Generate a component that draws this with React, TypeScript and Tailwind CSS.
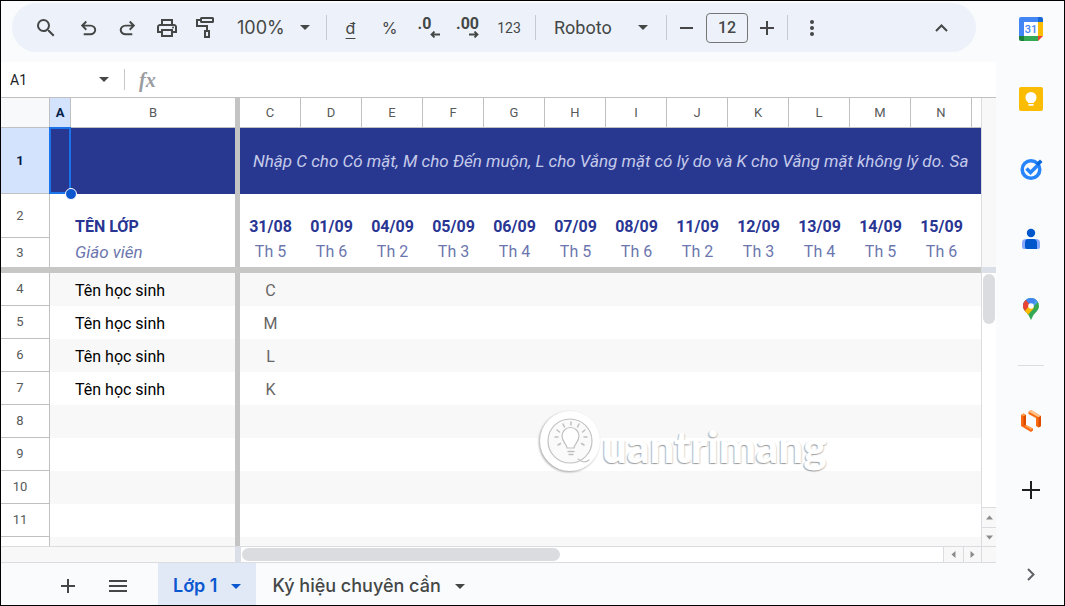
import type { ReactNode } from "react";
import { MdOutlinePrint, MdSearch } from "react-icons/md";

const days = [
  ["C", "31/08", "Th 5"],
  ["D", "01/09", "Th 6"],
  ["E", "04/09", "Th 2"],
  ["F", "05/09", "Th 3"],
  ["G", "06/09", "Th 4"],
  ["H", "07/09", "Th 5"],
  ["I", "08/09", "Th 6"],
  ["J", "11/09", "Th 2"],
  ["K", "12/09", "Th 3"],
  ["L", "13/09", "Th 4"],
  ["M", "14/09", "Th 5"],
  ["N", "15/09", "Th 6"],
];

const students = [
  { row: 4, name: "Tên học sinh", mark: "C" },
  { row: 5, name: "Tên học sinh", mark: "M" },
  { row: 6, name: "Tên học sinh", mark: "L" },
  { row: 7, name: "Tên học sinh", mark: "K" },
  { row: 8, name: "", mark: "" },
  { row: 9, name: "", mark: "" },
  { row: 10, name: "", mark: "" },
  { row: 11, name: "", mark: "" },
];

function Caret() {
  return (
    <svg width="10" height="5" viewBox="0 0 10 5" fill="currentColor" aria-hidden="true">
      <path d="M0 0h10L5 5z" />
    </svg>
  );
}

function Separator() {
  return <span className="mx-1 h-[25px] w-px shrink-0 bg-[#c7cbd1]" />;
}

function Tool({ label, children, wide }: { label: string; children: ReactNode; wide?: boolean }) {
  return (
    <button
      aria-label={label}
      className={
        wide
          ? "flex h-10 w-11 shrink-0 items-center justify-center"
          : "flex h-10 w-[39px] shrink-0 items-center justify-center"
      }
    >
      {children}
    </button>
  );
}

function Toolbar() {
  return (
    <div className="flex h-[61px] shrink-0 px-[11px] pt-[2px]">
      <div className="mr-[9px] flex h-[49px] flex-1 items-center rounded-full bg-[#edf2fa] pl-[14px] pr-[15px] text-[#444746]">
        <Tool label="Tìm kiếm">
          <MdSearch size={24} />
        </Tool>
        <span className="w-1 shrink-0" />
        <Tool label="Hoàn tác">
          <svg width="23" height="23" viewBox="0 -960 960 960" fill="currentColor">
            <path d="M280-200v-80h284q63 0 109.5-40T720-420q0-60-46.5-100T564-560H312l104 104-56 56-200-200 200-200 56 56-104 104h252q97 0 169.5 63T800-420q0 94-72.5 157T564-200H280Z" transform="translate(0 40)" />
          </svg>
        </Tool>
        <Tool label="Làm lại">
          <svg width="23" height="23" viewBox="0 -960 960 960" fill="currentColor">
            <path d="M396-200q-97 0-169.5-63T154-420q0-94 72.5-157T396-640h252L544-744l56-56 200 200-200 200-56-56 104-104H396q-63 0-109.5 40T240-420q0 60 46.5 100T396-280h284v80H396Z" transform="translate(0 40)" />
          </svg>
        </Tool>
        <Tool label="In">
          <MdOutlinePrint size={24} />
        </Tool>
        <Tool label="Sao chép định dạng">
          <svg width="20" height="23" viewBox="0 0 20 23" fill="none" stroke="currentColor" strokeWidth="2">
            <rect x="5" y="2" width="12" height="4" rx="0.5" />
            <path d="M5 4H1v6h10v5" />
            <rect x="9" y="15" width="4" height="6" />
          </svg>
        </Tool>
        <button className="flex h-10 w-[97px] shrink-0 items-center justify-between px-3 font-[Inter,sans-serif] text-lg">
          100%
          <Caret />
        </button>
        <Separator />
        <Tool label="Định dạng tiền tệ">
          <span className="font-[Inter,sans-serif] text-base underline underline-offset-4">đ</span>
        </Tool>
        <Tool label="Định dạng phần trăm">
          <span className="font-[Inter,sans-serif] text-base">%</span>
        </Tool>
        <Tool label="Giảm số chữ số thập phân">
          <span className="flex flex-col items-start font-[Roboto,sans-serif] text-base leading-[14px] font-bold">
            .0
            <svg className="ml-3" width="10" height="7" viewBox="0 0 10 7" fill="none" stroke="currentColor" strokeWidth="1.8">
              <path d="M10 3.5H1.5M4.5 .5l-3 3 3 3" />
            </svg>
          </span>
        </Tool>
        <Tool label="Tăng số chữ số thập phân">
          <span className="flex flex-col items-end font-[Roboto,sans-serif] text-base leading-[14px] font-bold">
            .00
            <svg width="10" height="7" viewBox="0 0 10 7" fill="none" stroke="currentColor" strokeWidth="1.8">
              <path d="M0 3.5h8.500M5.500 .5l3 3-3 3" />
            </svg>
          </span>
        </Tool>
        <Tool label="Định dạng khác" wide>
          <span className="font-[Roboto,sans-serif] text-sm">123</span>
        </Tool>
        <Separator />
        <button className="flex h-10 w-[122px] shrink-0 items-center justify-between px-[14px] font-[Roboto,sans-serif] text-lg">
          Roboto
          <Caret />
        </button>
        <Separator />
        <div className="flex shrink-0 items-center px-px">
          <button aria-label="Giảm cỡ chữ" className="flex h-[30px] w-[30px] items-center justify-center">
            <svg width="14" height="14" viewBox="0 0 14 14" fill="currentColor">
              <path d="M0 6h13v2H0z" />
            </svg>
          </button>
          <input
            aria-label="Cỡ chữ"
            defaultValue="12"
            className="mx-1 h-[30px] w-[42px] rounded-[4px] border border-[#747775] text-center font-[Roboto,sans-serif] text-base font-medium outline-none"
          />
          <button aria-label="Tăng cỡ chữ" className="flex h-[30px] w-[30px] items-center justify-center">
            <svg width="14" height="14" viewBox="0 0 14 14" fill="currentColor">
              <path d="M0 6h6V0h2v6h6v2H8v6H6V8H0z" />
            </svg>
          </button>
        </div>
        <Separator />
        <Tool label="Khác">
          <svg width="4" height="16" viewBox="0 0 4 16" fill="currentColor">
            <circle cx="2" cy="2" r="2" />
            <circle cx="2" cy="8" r="2" />
            <circle cx="2" cy="14" r="2" />
          </svg>
        </Tool>
        <button aria-label="Ẩn trình đơn" className="ml-auto flex h-10 w-10 items-center justify-center">
          <svg width="13" height="8" viewBox="0 0 13 8" fill="none" stroke="currentColor" strokeWidth="2">
            <path d="M1 7l5.500-5.500L12 7" />
          </svg>
        </button>
      </div>
    </div>
  );
}

function FormulaBar() {
  return (
    <div className="flex h-9 shrink-0 items-center border-b border-[#c0c0c0] bg-white">
      <input
        aria-label="Hộp tên"
        defaultValue="A1"
        className="w-[98px] pl-[9px] font-[Roboto,sans-serif] text-sm text-[#202124] outline-none"
      />
      <button aria-label="Mở hộp tên" className="text-[#444746]">
        <Caret />
      </button>
      <span className="ml-[15px] h-[21px] w-px bg-[#c7c7c7]" />
      <label
        htmlFor="formula"
        className="ml-[14px] w-5 font-['Liberation_Serif',serif] text-xl leading-6 font-bold text-[#9a9c9f] italic"
      >
        fx
      </label>
      <input id="formula" className="ml-2 h-6 flex-1 outline-none" />
    </div>
  );
}

function RowHead({ n }: { n: number }) {
  return (
    <th
      scope="row"
      className={
        n === 1
          ? "border-r border-b border-[#c0c0c0] bg-[#d3e3fd] pr-[10px] align-middle text-[13px] font-bold text-[#041e49]"
          : n === 3
            ? "border-r border-[#c0c0c0] bg-white pr-[10px] align-middle text-[13px] font-normal text-[#575a5a]"
            : "border-r border-b border-[#c0c0c0] bg-white pr-[10px] align-middle text-[13px] font-normal text-[#575a5a]"
      }
    >
      {n}
    </th>
  );
}

function Sheet() {
  return (
    <table className="w-full table-fixed border-separate border-spacing-0 bg-white font-[Roboto,sans-serif] text-base leading-6">
      <colgroup>
        <col className="w-[49px]" />
        <col className="w-[21px]" />
        <col className="w-[164px]" />
        <col className="w-[5px]" />
        {days.map(([c]) => (
          <col key={c} className="w-[61px]" />
        ))}
        <col />
      </colgroup>
      <thead>
        <tr className="h-[30px] text-[13px] leading-4 text-[#575a5a]">
          <td className="border-r border-b border-[#c0c0c0] bg-[#f8f9fa]" />
          <th scope="col" className="border-r border-b border-[#c0c0c0] bg-[#d3e3fd] font-bold text-[#041e49]">
            A
          </th>
          <th scope="col" className="border-b border-[#c0c0c0] font-normal">
            B
          </th>
          <td className="bg-[#c4c4c4]" />
          {days.map(([c]) => (
            <th key={c} scope="col" className="border-r border-b border-[#c0c0c0] font-normal">
              {c}
            </th>
          ))}
          <td className="border-b border-[#c0c0c0]" />
        </tr>
      </thead>
      <tbody>
        <tr className="h-[66px]">
          <RowHead n={1} />
          <td className="relative bg-[#283891]">
            <span className="absolute -top-px right-0 bottom-0 -left-px z-10 border-2 border-[#1a73e8]" />
            <span className="absolute -right-[6px] -bottom-[6px] z-20 h-3 w-3 rounded-full border border-white bg-[#0b57d0]" />
          </td>
          <td className="bg-[#283891]" />
          <td className="bg-[#c4c4c4]" />
          <td
            colSpan={13}
            className="overflow-hidden bg-[#283891] pl-[13px] text-[17px] whitespace-nowrap text-[#c5cae9] italic"
          >
            Nhập C cho Có mặt, M cho Đến muộn, L cho Vắng mặt có lý do và K cho Vắng mặt không lý do. Sa
          </td>
        </tr>
        <tr className="h-[44px] align-bottom leading-[22px] font-bold text-[#283593]">
          <RowHead n={2} />
          <td />
          <td className="pl-1">TÊN LỚP</td>
          <td className="bg-[#c4c4c4]" />
          {days.map(([c, date]) => (
            <td key={c} className="text-center">
              {date}
            </td>
          ))}
          <td />
        </tr>
        <tr className="h-[29px] text-[#6c76ae]">
          <RowHead n={3} />
          <td />
          <td className="pb-[2px] pl-1 text-[17px] italic">Giáo viên</td>
          <td className="bg-[#c4c4c4]" />
          {days.map(([c, , day]) => (
            <td key={c} className="pb-[2px] text-center">
              {day}
            </td>
          ))}
          <td />
        </tr>
        <tr className="h-[6px]">
          <td colSpan={17} className="bg-[#c7c8c6]" />
        </tr>
        {students.map(({ row, name, mark }) => (
          <tr key={row} className="h-[33px] odd:bg-[#f8f8f8] even:bg-white">
            <RowHead n={row} />
            <td />
            <td className="pt-[2px] pl-1 text-black">{name}</td>
            <td className="bg-[#c4c4c4]" />
            <td className="pt-[2px] text-center text-[#666666]">{mark}</td>
            <td colSpan={12} />
          </tr>
        ))}
        <tr className="h-[33px] bg-[#f8f8f8]">
          <td className="border-r border-[#c0c0c0] bg-white" />
          <td colSpan={2} />
          <td className="bg-[#c4c4c4]" />
          <td colSpan={13} />
        </tr>
      </tbody>
    </table>
  );
}

function Watermark() {
  return (
    <div className="pointer-events-none absolute top-[308px] left-[537px] flex items-start">
      <svg
        className="drop-shadow-[-1px_1px_1px_rgba(0,0,0,0.35)]"
        width="64"
        height="70"
        viewBox="0 0 64 70"
        fill="none"
        stroke="#fff"
        strokeLinecap="round"
      >
        <circle cx="32" cy="35" r="26" strokeWidth="8" />
        <circle cx="32" cy="35" r="22" fill="#fafafa" stroke="#c4c4c4" strokeWidth="1.2" />
        <path d="M40 53c5 4 8 4 11 1" stroke="#c4c4c4" strokeWidth="1.2" />
        <path
          d="M29 42c0-4-5-6-5-12a8.500 8.500 0 0 1 17 0c0 6-5 8-5 12z"
          fill="#fff"
          stroke="#c0c0c0"
          strokeWidth="1.2"
        />
        <path d="M30 45.500h6M31 48.500h4" stroke="#c0c0c0" strokeWidth="1.500" />
        <path
          d="M33 16v3M25 18l1.500 3M41 18l-1.500 3M19 24l2.500 2M47 24l-2.500 2M17 31h3M46 31h3M20 39l2.500-1.500M46 39l-2.500-1.500"
          stroke="#c0c0c0"
          strokeWidth="1.500"
        />
      </svg>
      <span className="pt-[12px] font-[Lato,sans-serif] text-[44px] leading-[56px] font-black text-white [text-shadow:-1px_1px_1px_rgba(0,0,0,0.3),1px_1px_1px_rgba(0,0,0,0.15)]">
        uantrimang
      </span>
    </div>
  );
}

function Arrow({ d, label }: { d: string; label: string }) {
  return (
    <button aria-label={label} className="flex h-full w-full items-center justify-center bg-[#f8f8f8] text-[#8b8b8b]">
      <svg width="7" height="7" viewBox="0 0 7 7" fill="currentColor">
        <path d={d} />
      </svg>
    </button>
  );
}

function VerticalScroll() {
  return (
    <div className="flex w-[15px] shrink-0 flex-col border-l border-[#dadce0] bg-white">
      <div className="h-[169px] shrink-0 bg-[#f8f8f8]" />
      <div className="h-[6px] shrink-0 bg-[#dadfe8]" />
      <div className="mx-px mt-px h-[50px] shrink-0 rounded-full bg-[#dadce0]" />
      <div className="mt-auto h-5 shrink-0 border-t border-[#dadce0]">
        <Arrow label="Cuộn lên" d="M0 5.500h7L3.500 1.500z" />
      </div>
      <div className="h-[19px] shrink-0 border-t border-[#dadce0]">
        <Arrow label="Cuộn xuống" d="M0 1.500h7L3.500 5.500z" />
      </div>
    </div>
  );
}

function HorizontalScroll() {
  return (
    <div className="flex h-[17px] shrink-0 border-y border-[#dadce0] bg-white">
      <div className="w-[234px] bg-[#f8f8f8]" />
      <div className="w-[6px] bg-[#dadfe8]" />
      <div className="my-px ml-px w-[318px] rounded-full bg-[#dadce0]" />
      <div className="ml-auto w-5 border-l border-[#dadce0]">
        <Arrow label="Cuộn trái" d="M5.500 0v7L1.500 3.500z" />
      </div>
      <div className="w-[18px] border-l border-[#dadce0]">
        <Arrow label="Cuộn phải" d="M1.500 0v7l4-3.500z" />
      </div>
      <div className="w-[15px] border-l border-[#dadce0] bg-[#f8f8f8]" />
    </div>
  );
}

function SheetTabs() {
  return (
    <div className="flex h-[42px] shrink-0 pl-[42px] font-[Inter,sans-serif] text-lg text-[#444746]">
      <button aria-label="Thêm trang tính" className="flex w-[50px] items-center justify-center pt-1">
        <svg width="14" height="14" viewBox="0 0 14 14" fill="currentColor">
          <path d="M0 6h6V0h2v6h6v2H8v6H6V8H0z" />
        </svg>
      </button>
      <button aria-label="Tất cả trang tính" className="mr-[15px] flex w-[50px] items-center justify-center pt-1">
        <svg width="18" height="12" viewBox="0 0 18 12" fill="currentColor">
          <path d="M0 0h18v2H0zM0 5h18v2H0zM0 10h18v2H0z" />
        </svg>
      </button>
      <button className="flex items-center gap-[14px] bg-[#e1e9f7] px-[15px] pt-1 font-semibold text-[#0b57d0]">
        Lớp 1
        <Caret />
      </button>
      <button className="flex items-center gap-[14px] px-4 pt-1 font-medium">
        Ký hiệu chuyên cần
        <Caret />
      </button>
    </div>
  );
}

function PanelButton({ label, children }: { label: string; children: ReactNode }) {
  return (
    <button aria-label={label} className="flex h-10 w-10 shrink-0 items-center justify-center">
      {children}
    </button>
  );
}

function SidePanel() {
  return (
    <aside className="flex w-[68px] shrink-0 flex-col items-center pt-2 pb-[11px] pl-[2px]">
      <div className="flex flex-col gap-[30px]">
        <PanelButton label="Lịch">
          <svg width="24" height="24" viewBox="0 0 24 24">
            <path d="M5 5h14v14H5z" fill="#fff" />
            <path d="M2 0h17v5H5v14H0V2a2 2 0 0 1 2-2z" fill="#4285f4" />
            <path d="M19 0h3a2 2 0 0 1 2 2v3h-5z" fill="#1967d2" />
            <path d="M19 5h5v14h-5z" fill="#fbbc04" />
            <path d="M5 19h14v5H5z" fill="#34a853" />
            <path d="M0 19h5v5H2a2 2 0 0 1-2-2z" fill="#188038" />
            <path d="M19 19h5l-5 5z" fill="#ea4335" />
            <text x="12" y="16" textAnchor="middle" fontFamily="Roboto, sans-serif" fontSize="11" fontWeight="500" fill="#4285f4">
              31
            </text>
          </svg>
        </PanelButton>
        <PanelButton label="Ghi chú">
          <svg width="24" height="24" viewBox="0 0 24 24">
            <rect width="24" height="24" rx="2" fill="#fbbc04" />
            <circle cx="12" cy="10.500" r="5.500" fill="#fff" />
            <path d="M9 13h6v3H9zM9.500 17h5v1.800h-5z" fill="#fff" />
          </svg>
        </PanelButton>
        <PanelButton label="Việc cần làm">
          <svg width="24" height="24" viewBox="0 0 24 24" fill="none">
            <circle cx="12" cy="12.500" r="8.800" stroke="#2684fc" strokeWidth="3.500" />
            <path d="M7.500 11.500l4 4L20 7" stroke="#2684fc" strokeWidth="3.600" />
            <path d="M17 6.500L21 2.500l2.500 2.500-4 4z" fill="#0066da" />
          </svg>
        </PanelButton>
        <PanelButton label="Danh bạ">
          <svg width="18" height="22" viewBox="0 0 18 22">
            <circle cx="9" cy="5" r="4.200" fill="#0057cc" />
            <path d="M4 11h10a4 4 0 0 1 4 4v4a2 2 0 0 1-2 2H2a2 2 0 0 1-2-2v-4a4 4 0 0 1 4-4z" fill="#86a9ff" />
            <path d="M6.500 11H11a4 4 0 0 1 4 4v6H5a2 2 0 0 1-2-2v-4.500A3.500 3.500 0 0 1 6.500 11z" fill="#0057cc" />
          </svg>
        </PanelButton>
        <PanelButton label="Bản đồ">
          <svg width="16" height="22" viewBox="0 0 16 22">
            <defs>
              <clipPath id="pin">
                <path d="M8 0a8 8 0 0 1 8 8c0 5-5 7-6.500 11L8 22l-1.500-3C5 15 0 13 0 8a8 8 0 0 1 8-8z" />
              </clipPath>
            </defs>
            <g clipPath="url(#pin)">
              <path d="M0 0h16v22H0z" fill="#34a853" />
              <path d="M0 8l8 0 5-6L16 0H0z" fill="#4285f4" />
              <path d="M8 8l5-6 3-2v3L9 10z" fill="#4f9bf8" />
              <path d="M0 2l2-1 6 7-6 6-3-2z" fill="#ea4335" />
              <path d="M1 14l7-8 3 4-7 8z" fill="#fbbc04" />
            </g>
            <circle cx="8" cy="8" r="2.800" fill="#fff" />
          </svg>
        </PanelButton>
      </div>
      <hr className="mt-9 mb-[35px] w-[26px] border-[#dadce0]" />
      <div className="flex flex-col gap-[29px]">
        <PanelButton label="Lucidchart">
          <svg width="20" height="22" viewBox="0 0 20 22">
            <path d="M0 5l2.500-1.500L5 5v10l7 3.500v2L10 22 0 16z" fill="#f96b13" />
            <path d="M0 5l2.500-1.500L5 5 2.500 6.300zM5 15l7 3.500-2 1.200-6-3.700z" fill="#ffa04d" />
            <path d="M7.500 1.500L10 0l10 6v10l-2.500 1.500L15 16V8L7.500 4z" fill="#f96b13" />
            <path d="M7.500 1.500L10 0l10 6-2.500 1.200z" fill="#ffc48a" />
            <path d="M2.500 6.300L5 5v10l-2.500 1zM17.500 7.200L20 6v10l-2.500 1.500z" fill="#db4c00" />
          </svg>
        </PanelButton>
        <PanelButton label="Tải tiện ích bổ sung">
          <svg width="18" height="18" viewBox="0 0 18 18" fill="#1f1f1f">
            <path d="M0 8h8V0h2v8h8v2h-8v8H8v-8H0z" />
          </svg>
        </PanelButton>
      </div>
      <div className="mt-auto">
        <PanelButton label="Ẩn bảng điều khiển bên">
          <svg width="8" height="13" viewBox="0 0 8 13" fill="none" stroke="#5f6368" strokeWidth="2">
            <path d="M1 1l5.500 5.500L1 12" />
          </svg>
        </PanelButton>
      </div>
    </aside>
  );
}

export default function App() {
  return (
    <div className="flex h-screen border border-black bg-[#f9fbfd]">
      <main className="flex min-w-0 flex-1 flex-col">
        <Toolbar />
        <FormulaBar />
        <div className="flex min-h-0 flex-1">
          <div className="relative min-w-0 flex-1 overflow-hidden">
            <Sheet />
            <Watermark />
          </div>
          <VerticalScroll />
        </div>
        <HorizontalScroll />
        <SheetTabs />
      </main>
      <SidePanel />
    </div>
  );
}
